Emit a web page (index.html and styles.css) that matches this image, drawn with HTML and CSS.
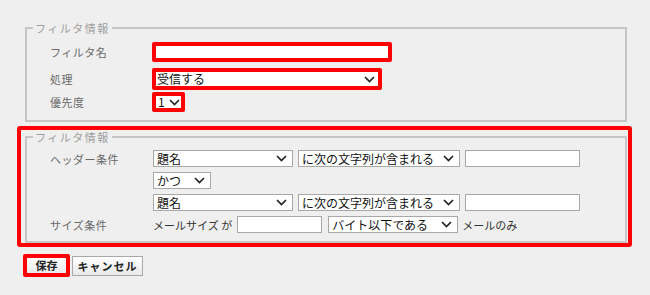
FILE: index.html
```html
<!DOCTYPE html>
<html lang="ja">
<head>
    <meta charset="UTF-8">
    <title>フィルタ設定</title>
    <link rel="stylesheet" href="styles.css">
</head>
<body>
    <div class="page">
        <fieldset class="box box-basic">
            <legend>フィルタ情報</legend>
            <div class="body">
                <div class="row row-name">
                    <label class="label">フィルタ名</label>
                    <span class="mark"><input class="text name-input" type="text"></span>
                </div>
                <div class="row row-action">
                    <label class="label">処理</label>
                    <span class="mark">
                        <select class="select action-select"><option>受信する</option></select>
                    </span>
                </div>
                <div class="row row-priority">
                    <label class="label">優先度</label>
                    <span class="mark">
                        <select class="select priority-select"><option>1</option></select>
                    </span>
                </div>
            </div>
        </fieldset>

        <div class="mark mark-block">
            <fieldset class="box box-cond">
                <legend>フィルタ情報</legend>
                <div class="body">
                    <div class="row">
                        <label class="label">ヘッダー条件</label>
                        <select class="select field-select"><option>題名</option></select>
                        <select class="select match-select"><option>に次の文字列が含まれる</option></select>
                        <input class="text value-input" type="text">
                    </div>
                    <div class="row">
                        <span class="label"></span>
                        <select class="select join-select"><option>かつ</option></select>
                    </div>
                    <div class="row">
                        <span class="label"></span>
                        <select class="select field-select"><option>題名</option></select>
                        <select class="select match-select"><option>に次の文字列が含まれる</option></select>
                        <input class="text value-input" type="text">
                    </div>
                    <div class="row">
                        <label class="label">サイズ条件</label>
                        <span class="inline-text">メールサイズ が</span>
                        <input class="text size-input" type="text">
                        <select class="select size-select"><option>バイト以下である</option></select>
                        <span class="inline-text">メールのみ</span>
                    </div>
                </div>
            </fieldset>
        </div>

        <div class="actions">
            <span class="mark"><button class="btn btn-save">保存</button></span>
            <button class="btn btn-cancel">キャンセル</button>
        </div>
    </div>
</body>
</html>
```

FILE: styles.css
```css
* {
    margin: 0;
    padding: 0;
    box-sizing: border-box;
}

body {
    font-family: "Noto Sans CJK JP", "DejaVu Sans", sans-serif;
    font-size: 11px;
    background: #efefef;
    color: #333;
}

.page {
    padding: 21px 0 0 17px;
}

/* fieldsets */
.box {
    border: 2px solid #c6c6c6;
    width: 602px;
}

.box legend {
    margin-left: 6px;
    padding: 0 2px;
    font-size: 11px;
    line-height: 14px;
    color: #9e9e9e;
    letter-spacing: 1.5px;
}

.box-basic {
    margin-left: 8px;
}

.box-basic .body {
    padding: 7px 0 8px 23px;
}

.box-cond .body {
    padding: 6px 0 8px 23px;
}

.row {
    display: flex;
    align-items: center;
    gap: 5px;
    height: 17px;
    margin-bottom: 5px;
}

.row:last-child {
    margin-bottom: 0;
}

.label {
    width: 98px;
    color: #6a6a6a;
    letter-spacing: 0.5px;
    flex-shrink: 0;
}

.box-basic .label {
    width: 97px;
}

.row-name {
    height: 20px;
    margin-bottom: 6px;
}

.row-action {
    height: 22px;
    margin-bottom: 2px;
}

.row-priority {
    height: 20px;
}

/* red highlight marks */
.mark {
    display: inline-flex;
    border: 4px solid #ff0000;
    border-radius: 2px;
    background: #fff;
}

.mark-block {
    display: block;
    width: 615px;
    margin-top: 4px;
    background: transparent;
    padding-left: 4px;
    border-radius: 3px;
}

/* controls */
.text {
    height: 17px;
    background: #fff;
    border: 1px solid #a8a8a8;
    outline: none;
}

.select {
    appearance: none;
    -webkit-appearance: none;
    height: 17px;
    padding: 0 18px 0 3px;
    font-family: "Noto Sans CJK JP", sans-serif;
    font-size: 12px;
    line-height: 15px;
    color: #111;
    border: 1px solid #a8a8a8;
    border-radius: 0;
    background: #fff url("data:image/svg+xml,%3Csvg xmlns='http://www.w3.org/2000/svg' width='11' height='7' viewBox='0 0 11 7'%3E%3Cpath d='M1 1l4.5 4.5L10 1' fill='none' stroke='%23222' stroke-width='1.7'/%3E%3C/svg%3E") no-repeat right 5px center;
}

.mark > .text,
.mark > .select,
.mark > .btn {
    border: none;
}

.name-input {
    width: 232px;
    height: 12px;
}

.action-select {
    width: 222px;
    height: 14px;
    line-height: 14px;
    padding-left: 1px;
    background-position: right 3px center;
}

.priority-select {
    width: 25px;
    height: 12px;
    line-height: 12px;
    padding: 0 0 0 2px;
    background-position: right 1px center;
}

.field-select {
    width: 140px;
}

.match-select {
    width: 162px;
}

.value-input {
    width: 115px;
}

.join-select {
    width: 58px;
}

.size-input {
    width: 85px;
}

.size-select {
    width: 130px;
    margin-left: 1px;
}

.size-select + .inline-text {
    margin-left: -1px;
}

.inline-text {
    color: #333;
}

/* buttons */
.actions {
    display: flex;
    align-items: center;
    gap: 2px;
    margin: 7px 0 0 6px;
}

.btn {
    font-family: "Noto Sans CJK JP", sans-serif;
    font-size: 11px;
    font-weight: bold;
    color: #222;
    background: linear-gradient(#ffffff, #e9e9e9);
    border: 1px solid #a8a8a8;
    cursor: pointer;
}

.btn-save {
    width: 39px;
    height: 15px;
    line-height: 13px;
}

.btn-cancel {
    width: 71px;
    height: 20px;
    letter-spacing: 1px;
}
```
